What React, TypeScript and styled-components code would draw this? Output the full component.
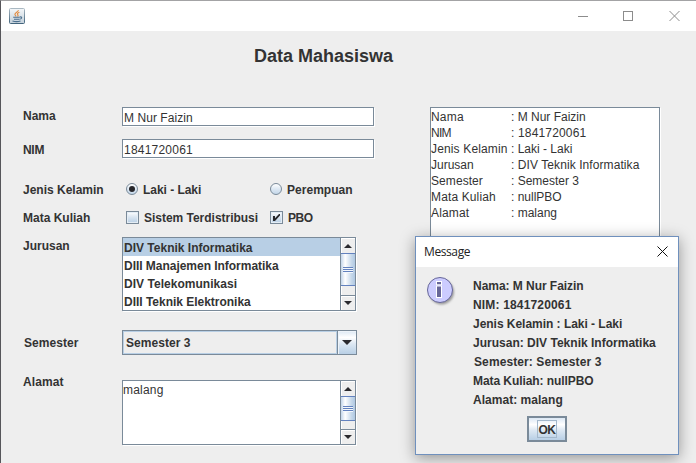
import React from "react";
import styled, { createGlobalStyle } from "styled-components";

const Global = createGlobalStyle`
  *, *::before, *::after { box-sizing: border-box; }
  html, body { margin: 0; padding: 0; overflow: hidden; background: #eee; }
`;

const Window = styled.div`
  position: relative;
  width: 696px;
  height: 463px;
  overflow: hidden;
  display: flex;
  flex-direction: column;
  background: #eeeeee;
  border-left: 1px solid #56565a;
  border-top: 1px solid #a3a3a5;
  color: #333333;
  font: bold 12px/16px "Liberation Sans", Arial, sans-serif;
  white-space: pre;
`;

const TitleBar = styled.div`
  height: 30px;
  flex: none;
  background: #fff;
  display: flex;
  align-items: center;
  justify-content: space-between;
  padding: 0 15px 0 8px;
`;

const Controls = styled.div`
  display: flex;
  gap: 34px;
  height: 14px;
`;

const Columns = styled.div`
  display: flex;
  flex: 1;
`;

const Form = styled.div`
  width: 407px;
  margin-left: 22px;
  flex: none;
`;

const Heading = styled.div`
  height: 76px;
  padding: 14px 0 0 231px;
  font-size: 18px;
  line-height: 22px;
`;

const FormRow = styled.div<{ $height: number }>`
  display: flex;
  height: ${(p) => p.$height}px;
`;

const Label = styled.div<{ $top: number; $indent?: number; $spacing?: number }>`
  width: 99px;
  flex: none;
  margin-top: ${(p) => p.$top}px;
  padding-left: ${(p) => p.$indent ?? 0}px;
  letter-spacing: ${(p) => p.$spacing ?? 0}px;
`;

const Tracked = styled.span<{ $spacing: number }>`
  letter-spacing: ${(p) => p.$spacing}px;
`;

const TextField = styled.div<{ $spacing?: number }>`
  width: 252px;
  height: 19px;
  background: #fff;
  border: 1px solid #7a8a99;
  box-shadow: 1px 1px 0 #fff;
  padding: 2px 0 0 1px;
  font-weight: normal;
  letter-spacing: ${(p) => p.$spacing ?? 0}px;
`;

const Option = styled.div<{ $width: number }>`
  width: ${(p) => p.$width}px;
  padding-left: 4px;
  height: 16px;
  display: flex;
  align-items: center;
  gap: 5px;
`;

const OptionText = styled(Tracked)`
  padding-top: 1px;
`;

const CheckSquare = styled.div`
  width: 13px;
  height: 13px;
  flex: none;
  border: 1px solid #7a8a99;
  background: linear-gradient(#ffffff, #dbe6f1 45%, #b8cfe5);
  box-shadow: inset 0 0 0 1px #e4edf5;
  display: flex;
`;

const RadioCircle = styled.div`
  width: 12px;
  height: 12px;
  flex: none;
  border: 1px solid #7a8a99;
  border-radius: 50%;
  background: linear-gradient(#ffffff, #dde8f3 50%, #c4d7e9);
  display: flex;
  align-items: center;
  justify-content: center;
`;

const RadioDot = styled.div`
  width: 6px;
  height: 6px;
  border-radius: 50%;
  background: #26262a;
`;

const ScrollPane = styled.div<{ $height: number }>`
  width: 234px;
  height: ${(p) => p.$height}px;
  border: 1px solid #7a8a99;
  box-shadow: 1px 1px 0 #fff;
  background: #fff;
  display: flex;
`;

const Viewport = styled.div`
  flex: 1;
  overflow: hidden;
`;

const ListItem = styled.div<{ $selected?: boolean; $spacing: number }>`
  height: 18px;
  line-height: 20px;
  padding-left: 1px;
  background: ${(p) => (p.$selected ? "#b8cfe5" : "#fff")};
  letter-spacing: ${(p) => p.$spacing}px;
`;

const AreaText = styled.div`
  font-weight: normal;
  padding-top: 1px;
  letter-spacing: 0.2px;
`;

const ScrollBar = styled.div`
  width: 15px;
  border-left: 1px solid #7a8a99;
  background: #eee;
  display: flex;
  flex-direction: column;
`;

const ArrowButton = styled.div<{ $down?: boolean }>`
  height: 15px;
  flex: none;
  display: flex;
  align-items: center;
  justify-content: center;
  padding-right: 1px;
  box-shadow: inset 1px 1px 0 #fff;
  border-top: ${(p) => (p.$down ? "1px solid #7a8a99" : "none")};
`;

const Thumb = styled.div<{ $height: number }>`
  height: ${(p) => p.$height}px;
  flex: none;
  border: 1px solid #6382bf;
  border-right: none;
  border-left: none;
  background: linear-gradient(90deg, #c4d6ea, #ffffff 30%, #c6d8ea 75%, #b0c8e2);
  display: flex;
  flex-direction: column;
  align-items: center;
  justify-content: center;
  gap: 1px;
`;

const Grip = styled.div`
  width: 10px;
  height: 1px;
  background: #6382bf;
  box-shadow: 0 1px 0 #f4f8fc;
`;

const Track = styled.div`
  flex: 1;
  border-left: 1px solid #fff;
`;

const Combo = styled.div`
  width: 235px;
  height: 25px;
  display: flex;
  border: 1px solid #7a8a99;
`;

const ComboValue = styled.div`
  flex: 1;
  border: 1px solid #b8cfe5;
  padding: 3px 0 0 2px;
  letter-spacing: 0.05px;
`;

const ComboButton = styled.div`
  width: 19px;
  border-left: 1px solid #7a8a99;
  background: linear-gradient(#dce8f4, #ffffff 28%, #dde8f3 55%, #b8cfe5);
  box-shadow: inset 1px 1px 0 #edf3f9;
  display: flex;
  align-items: center;
  justify-content: center;
`;

const Output = styled.div`
  width: 230px;
  height: 140px;
  margin-top: 76px;
  background: #fff;
  border: 1px solid #7a8a99;
  box-shadow: 1px 1px 0 #fff;
  font-weight: normal;
  padding-top: 1px;
`;

const OutputRow = styled.div`
  display: flex;
  height: 16px;
`;

const OutputKey = styled.div<{ $spacing: number }>`
  width: 80px;
  letter-spacing: ${(p) => p.$spacing}px;
`;

const Dialog = styled.div`
  position: absolute;
  left: 414px;
  top: 235px;
  width: 264px;
  height: 219px;
  background: #eee;
  border: 1px solid #6f90bd;
  box-shadow: 0 3px 14px rgba(0, 0, 0, 0.38);
`;

const DialogBar = styled.div`
  height: 30px;
  background: #fff;
  display: flex;
  align-items: center;
  justify-content: space-between;
  padding: 0 10px 0 8px;
  font: normal 12px/16px "Open Sans", "Noto Sans", sans-serif;
  letter-spacing: -0.4px;
  color: #222;
`;

const DialogBody = styled.div`
  display: flex;
  padding: 9px 0 0 10px;
`;

const Messages = styled.div`
  margin-left: 11px;
`;

const Message = styled.div<{ $spacing: number; $indent?: number }>`
  height: 19px;
  line-height: 20px;
  padding-left: ${(p) => p.$indent ?? 0}px;
  letter-spacing: ${(p) => p.$spacing}px;
`;

const OkButton = styled.div`
  width: 40px;
  height: 26px;
  margin: 7px 0 0 111px;
  border: 2px solid #7a8a99;
  background: linear-gradient(#dce8f4, #ffffff 30%, #dde8f3 55%, #b8cfe5);
  display: flex;
  align-items: center;
  justify-content: center;
`;

const OkFocus = styled.div`
  width: 20px;
  height: 18px;
  border: 1px solid #a3b8cc;
  line-height: 18px;
  text-align: center;
  letter-spacing: -0.5px;
`;

const JavaIcon = () => (
  <svg width="16" height="16" viewBox="0 0 16 16">
    <defs>
      <linearGradient id="jbg" x1="0" y1="0" x2="0" y2="1">
        <stop offset="0" stopColor="#f4f7f9" />
        <stop offset="1" stopColor="#c3d0da" />
      </linearGradient>
      <linearGradient id="jedge" x1="0" y1="0" x2="0" y2="1">
        <stop offset="0" stopColor="#a9b8c2" />
        <stop offset="1" stopColor="#42647c" />
      </linearGradient>
    </defs>
    <rect x="0.5" y="0.5" width="15" height="15" rx="1" fill="url(#jbg)" stroke="url(#jedge)" />
    <path d="M9.300 2.200C9.700 4 5.600 4.600 5.900 6.500c.1.800.8 1.300 1.200 1.800M10.400 4.300C8.300 5 8 6 8.900 6.800c.5.600 0 1.200-.5 1.600" fill="none" stroke="#e38a3d" strokeWidth="1.100" />
    <path d="M4.200 9.300h6.500M5 11.200h5.200M3.500 13c2.500.8 6 .7 8-.1M10.800 9c2.600-.6 2.500 1.800-.3 2.300" fill="none" stroke="#4c6f8e" strokeWidth="1.100" />
  </svg>
);

const Arrow = ({ up, big }: { up?: boolean; big?: boolean }) => {
  const w = big ? 10 : 8;
  const h = w / 2;
  return (
    <svg width={w} height={h} viewBox={`0 0 ${w} ${h}`}>
      <path d={up ? `M0 ${h}L${h} 0L${w} ${h}Z` : `M0 0H${w}L${h} ${h}Z`} fill="#2a2a2e" />
    </svg>
  );
};

const InfoIcon = () => (
  <svg width="36" height="36" viewBox="0 0 36 36">
    <defs>
      <filter id="soft" x="-20%" y="-20%" width="140%" height="140%">
        <feGaussianBlur stdDeviation="1.300" />
      </filter>
    </defs>
    <circle cx="15.500" cy="16" r="12.500" fill="#9a9a9a" filter="url(#soft)" />
    <circle cx="14" cy="14" r="12.500" fill="#ccccff" stroke="#666699" />
    <path d="M10 5h6v4h-6zM10 9.500h6v12.500h-6z" fill="#fff" />
    <path d="M11 6h4v2.200h-4zM11 10.500h4v10.500h-4z" fill="#666699" />
  </svg>
);

const Bars = ({ thumb }: { thumb: number }) => (
  <ScrollBar>
    <ArrowButton><Arrow up /></ArrowButton>
    <Thumb $height={thumb}><Grip /><Grip /><Grip /></Thumb>
    <Track />
    <ArrowButton $down><Arrow /></ArrowButton>
  </ScrollBar>
);

const majors = [
  { name: "DIV Teknik Informatika", spacing: 0 },
  { name: "DIII Manajemen Informatika", spacing: -0.03 },
  { name: "DIV Telekomunikasi", spacing: 0.03 },
  { name: "DIII Teknik Elektronika", spacing: -0.02 },
];

const output = [
  { k: "Nama", v: "M Nur Faizin", ks: 0.2, vs: 0 },
  { k: "NIM", v: "1841720061", ks: -0.7, vs: 0.16 },
  { k: "Jenis Kelamin", v: "Laki - Laki", ks: 0.15, vs: 0 },
  { k: "Jurusan", v: "DIV Teknik Informatika", ks: 0, vs: 0.08 },
  { k: "Semester", v: "Semester 3", ks: 0.07, vs: 0 },
  { k: "Mata Kuliah", v: "nullPBO", ks: 0.13, vs: 0 },
  { k: "Alamat", v: "malang", ks: 0.15, vs: 0 },
];

const messages = [
  { text: "Nama: M Nur Faizin", spacing: -0.04 },
  { text: "NIM: 1841720061", spacing: 0.16 },
  { text: "Jenis Kelamin : Laki - Laki", spacing: -0.03 },
  { text: "Jurusan: DIV Teknik Informatika", spacing: 0.01 },
  { text: "Semester: Semester 3", spacing: 0.1, indent: 1 },
  { text: "Mata Kuliah: nullPBO", spacing: -0.07 },
  { text: "Alamat: malang", spacing: 0.03 },
];

export default function App() {
  return (
    <>
      <Global />
      <Window>
        <TitleBar>
          <JavaIcon />
          <Controls>
            <svg width="12" height="14"><path d="M1 7.500h10" stroke="#8c8c8c" /></svg>
            <svg width="12" height="14"><rect x="0.500" y="2.500" width="9" height="9" fill="none" stroke="#8c8c8c" /></svg>
            <svg width="12" height="14"><path d="M0.500 2l10 10M10.500 2L0.500 12" stroke="#8c8c8c" fill="none" /></svg>
          </Controls>
        </TitleBar>
        <Columns>
          <Form>
            <Heading>Data Mahasiswa</Heading>
            <FormRow $height={32}>
              <Label $top={1}>Nama</Label>
              <TextField $spacing={0.06}>M Nur Faizin</TextField>
            </FormRow>
            <FormRow $height={42}>
              <Label $top={3} $spacing={-0.3}>NIM</Label>
              <TextField $spacing={0.22}>1841720061</TextField>
            </FormRow>
            <FormRow $height={28}>
              <Label $top={1}>Jenis Kelamin</Label>
              <Option $width={144}>
                <RadioCircle><RadioDot /></RadioCircle>
                <OptionText $spacing={-0.04}>Laki - Laki</OptionText>
              </Option>
              <Option $width={120}>
                <RadioCircle />
                <OptionText $spacing={0.03}>Perempuan</OptionText>
              </Option>
            </FormRow>
            <FormRow $height={28}>
              <Label $top={1}>Mata Kuliah</Label>
              <Option $width={144}>
                <CheckSquare />
                <OptionText $spacing={-0.02}>Sistem Terdistribusi</OptionText>
              </Option>
              <Option $width={120}>
                <CheckSquare>
                  <svg width="11" height="11" viewBox="0 0 11 11">
                    <path d="M2 4h2v2.200L8 2h1v1.500L4 9H2z" fill="#26262a" />
                  </svg>
                </CheckSquare>
                <OptionText $spacing={-0.4}>PBO</OptionText>
              </Option>
            </FormRow>
            <FormRow $height={93}>
              <Label $top={1}>Jurusan</Label>
              <ScrollPane $height={74}>
                <Viewport>
                  {majors.map((m, i) => (
                    <ListItem key={m.name} $selected={i === 0} $spacing={m.spacing}>{m.name}</ListItem>
                  ))}
                </Viewport>
                <Bars thumb={33} />
              </ScrollPane>
            </FormRow>
            <FormRow $height={50}>
              <Label $top={5} $indent={1} $spacing={0.05}>Semester</Label>
              <Combo>
                <ComboValue>Semester 3</ComboValue>
                <ComboButton><Arrow big /></ComboButton>
              </Combo>
            </FormRow>
            <FormRow $height={65}>
              <Label $top={-6} $spacing={0.1}>Alamat</Label>
              <ScrollPane $height={65}>
                <Viewport><AreaText>malang</AreaText></Viewport>
                <Bars thumb={25} />
              </ScrollPane>
            </FormRow>
          </Form>
          <Output>
            {output.map((o) => (
              <OutputRow key={o.k}>
                <OutputKey $spacing={o.ks}>{o.k}</OutputKey>
                <Tracked $spacing={o.vs}>: {o.v}</Tracked>
              </OutputRow>
            ))}
          </Output>
        </Columns>
        <Dialog role="dialog">
          <DialogBar>
            <span>Message</span>
            <svg width="11" height="13"><path d="M0.500 0.500l10 10M10.500 0.500l-10 10" stroke="#111" fill="none" /></svg>
          </DialogBar>
          <DialogBody>
            <InfoIcon />
            <Messages>
              {messages.map((m) => (
                <Message key={m.text} $spacing={m.spacing} $indent={m.indent}>{m.text}</Message>
              ))}
            </Messages>
          </DialogBody>
          <OkButton><OkFocus>OK</OkFocus></OkButton>
        </Dialog>
      </Window>
    </>
  );
}
